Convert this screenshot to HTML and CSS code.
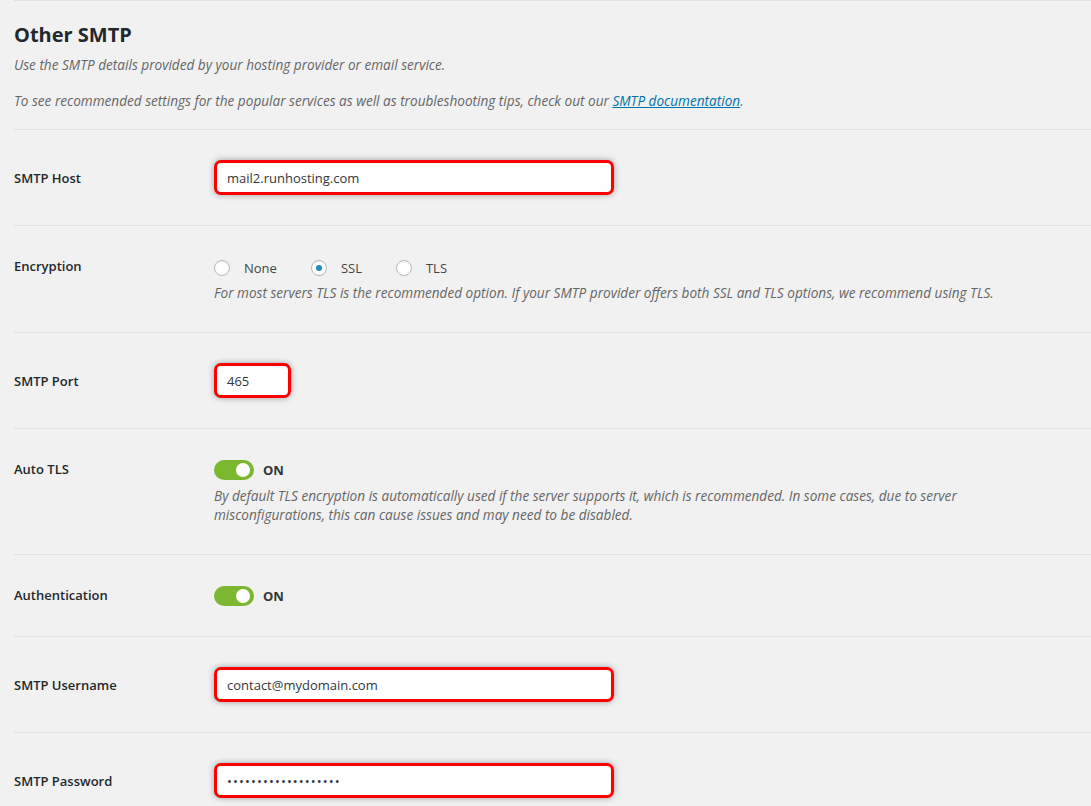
FILE: index.html
```html
<!DOCTYPE html>
<html lang="en">
  <head>
    <meta charset="UTF-8" />
    <meta name="viewport" content="width=device-width, initial-scale=1.0" />
    <title>Other SMTP</title>
    <link rel="stylesheet" href="styles.css">
  </head>
  <body>
    <div class="wrap">
      <div class="section-head">
        <h2>Other SMTP</h2>
        <p class="desc">Use the SMTP details provided by your hosting provider or email service.</p>
        <p class="desc">To see recommended settings for the popular services as well as troubleshooting tips, check out our <a href="#">SMTP documentation</a>.</p>
      </div>

      <div class="row row-input">
        <div class="label">SMTP Host</div>
        <div class="field">
          <input class="text wide" type="text" value="mail2.runhosting.com">
        </div>
      </div>

      <div class="row">
        <div class="label">Encryption</div>
        <div class="field">
          <div class="radios">
            <label class="radio"><span class="dot"></span>None</label>
            <label class="radio"><span class="dot checked"></span>SSL</label>
            <label class="radio"><span class="dot"></span>TLS</label>
          </div>
          <p class="desc">For most servers TLS is the recommended option. If your SMTP provider offers both SSL and TLS options, we recommend using TLS.</p>
        </div>
      </div>

      <div class="row row-input">
        <div class="label">SMTP Port</div>
        <div class="field">
          <input class="text small" type="text" value="465">
        </div>
      </div>

      <div class="row">
        <div class="label">Auto TLS</div>
        <div class="field">
          <div class="toggle"><span class="switch"></span>ON</div>
          <p class="desc narrow">By default TLS encryption is automatically used if the server supports it, which is recommended. In some cases, due to server misconfigurations, this can cause issues and may need to be disabled.</p>
        </div>
      </div>

      <div class="row">
        <div class="label">Authentication</div>
        <div class="field">
          <div class="toggle"><span class="switch"></span>ON</div>
        </div>
      </div>

      <div class="row row-input">
        <div class="label">SMTP Username</div>
        <div class="field">
          <input class="text wide" type="text" value="contact@mydomain.com">
        </div>
      </div>

      <div class="row row-input">
        <div class="label">SMTP Password</div>
        <div class="field">
          <input class="text wide pass" type="password" value="passwordpassword123">
        </div>
      </div>
    </div>
  </body>
</html>
```

FILE: styles.css
```css
body {
  margin: 0;
  background: #f1f1f1;
  font-family: 'Open Sans', 'Noto Sans', sans-serif;
  font-size: 13px;
  color: #444;
}
.wrap {
  padding-left: 14px;
}
.section-head {
  border-top: 1px solid #e1e1e1;
  padding: 20px 0 19px;
}
h2 {
  margin: 0 0 6px;
  font-size: 20px;
  font-weight: 700;
  color: #23282d;
  line-height: 28px;
}
.desc {
  margin: 0;
  font-style: italic;
  color: #666;
  font-size: 13.6px;
  line-height: 19px;
}
.section-head .desc + .desc {
  margin-top: 17px;
}
.desc a {
  color: #0073aa;
}
/* one settings row */
.row {
  display: grid;
  grid-template-columns: 200px 1fr;
  border-top: 1px solid #e1e1e1;
  padding: 30px 0;
  align-items: start;
}
.row-input {
  align-items: center;
}
.label {
  font-weight: 600;
  color: #23282d;
  line-height: 20px;
}
.text {
  box-sizing: border-box;
  height: 35px;
  border: 3px solid #ff0000;
  border-radius: 7px;
  background: #fff;
  box-shadow: 0 0 6px rgba(0, 0, 0, 0.35);
  padding: 0 10px;
  font-family: 'Open Sans', 'Noto Sans', sans-serif;
  font-size: 13px;
  color: #32373c;
  outline: none;
}
.wide {
  width: 400px;
}
.small {
  width: 77px;
}
.pass {
  letter-spacing: 1.1px;
}
.radios {
  display: flex;
  height: 24px;
  align-items: center;
  margin-bottom: 3px;
}
.radio {
  display: flex;
  align-items: center;
  margin-right: 34px;
  color: #444;
}
.dot {
  box-sizing: border-box;
  width: 16px;
  height: 16px;
  border: 1px solid #b4b9be;
  border-radius: 50%;
  background: #fff;
  margin-right: 14px;
  box-shadow: inset 0 1px 2px rgba(0, 0, 0, 0.07);
  display: flex;
  align-items: center;
  justify-content: center;
}
.dot.checked:before {
  content: '';
  width: 6px;
  height: 6px;
  border-radius: 50%;
  background: #1e8cbe;
}
.toggle {
  display: flex;
  align-items: center;
  height: 21px;
  font-weight: 700;
  color: #32373c;
}
.switch {
  position: relative;
  width: 40px;
  height: 20px;
  border-radius: 10px;
  background: #7cb82f;
  margin-right: 9px;
}
.switch:after {
  content: '';
  position: absolute;
  right: 4px;
  top: 3px;
  width: 14px;
  height: 14px;
  border-radius: 50%;
  background: #fff;
}
.toggle + .desc {
  margin-top: 6px;
}
.narrow {
  max-width: 760px;
}
```
